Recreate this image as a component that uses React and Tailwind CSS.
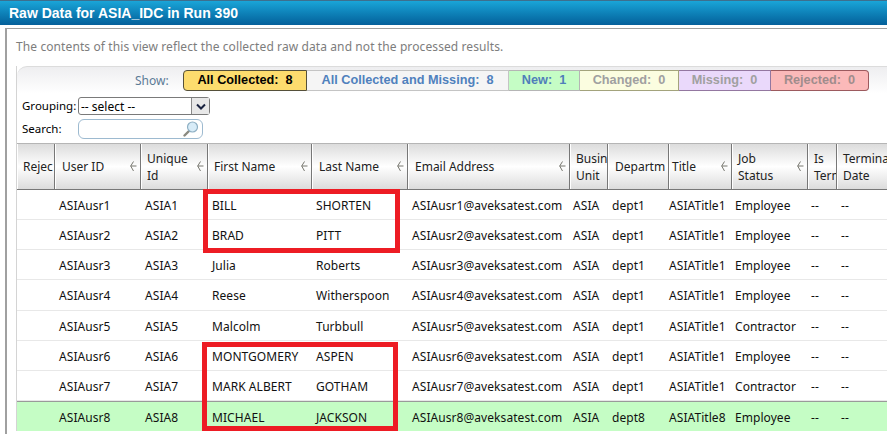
import React from "react";

const font = "font-['Noto_Sans','Open_Sans',sans-serif]";

const columns = [
  { label: "Rejec", width: "w-[38px]", sort: false, pad: "pl-[6px]" },
  { label: "User ID", width: "w-[86px]", sort: true, pad: "pl-[7px]" },
  { label: "Unique Id", width: "w-[67px]", sort: true, pad: "pl-[6px]" },
  { label: "First Name", width: "w-[104px]", sort: true, pad: "pl-[6px]" },
  { label: "Last Name", width: "w-[96px]", sort: true, pad: "pl-[7px]" },
  { label: "Email Address", width: "w-[162px]", sort: true, pad: "pl-[7px]" },
  { label: "Busin Unit", width: "w-[38px]", sort: false, pad: "pl-[6px]" },
  { label: "Departm", width: "w-[61px]", sort: false, pad: "pl-[7px]" },
  { label: "Title", width: "w-[63px]", sort: true, pad: "pl-[3px]" },
  { label: "Job\nStatus", width: "w-[76px]", sort: true, pad: "pl-[6px]" },
  { label: "Is Term", width: "w-[29px]", sort: false, pad: "pl-[6px]" },
  { label: "Termina Date", width: "w-[60px]", sort: false, pad: "pl-[6px]" },
];

const rows = [
  ["1", "BILL", "SHORTEN", "dept1", "Title1", "Employee"],
  ["2", "BRAD", "PITT", "dept1", "Title1", "Employee"],
  ["3", "Julia", "Roberts", "dept1", "Title1", "Employee"],
  ["4", "Reese", "Witherspoon", "dept1", "Title1", "Employee"],
  ["5", "Malcolm", "Turbbull", "dept1", "Title1", "Contractor"],
  ["6", "MONTGOMERY", "ASPEN", "dept1", "Title1", "Employee"],
  ["7", "MARK ALBERT", "GOTHAM", "dept1", "Title1", "Contractor"],
  ["8", "MICHAEL", "JACKSON", "dept8", "Title8", "Employee"],
];

const SortIcon = () => (
  <svg width="7" height="11" viewBox="0 0 7 11" className="shrink-0">
    <path d="M3.5 0.5L0.7 5H6.5M0.7 5L3.5 10" fill="none" stroke="#77776f" strokeWidth="1" />
  </svg>
);

const SearchIcon = () => (
  <svg width="16" height="16" viewBox="0 0 16 16">
    <path d="M6 10L1.5 14.5" stroke="#8a8a80" strokeWidth="2.4" strokeLinecap="round" />
    <circle cx="9.5" cy="6" r="5" fill="#d8ecf8" stroke="#8fb0c4" strokeWidth="1.2" />
  </svg>
);

const Tab = ({ className, children, count }) => (
  <div className={`h-[21px] flex items-center justify-center border-y border-r text-[12.7px] font-bold whitespace-pre font-['Liberation_Sans',sans-serif] ${className}`}>
    {children}:  {count}
  </div>
);

const App = () => {
  return (
    <div className={`w-[887px] h-[434px] overflow-hidden bg-white ${font}`}>
      <div className="h-[25px] pl-[9px] flex items-center border-t border-[#3d6f8e] bg-gradient-to-b from-[#1aa5d8] to-[#05609a] text-white text-[14px] font-bold font-['Liberation_Sans',sans-serif]">
        Raw Data for ASIA_IDC in Run 390
      </div>
      <div className="mt-[3px] ml-[5px] border-l-2 border-t border-[#a0a0a0] pl-[9px] h-[406px]">
        <p className="h-[37px] pt-[10px] text-[12px] leading-[16px] tracking-[0.1px] text-[#7d7d7d] whitespace-nowrap">
          The contents of this view reflect the collected raw data and not the processed results.
        </p>
        <div className="w-[873px] relative border-l border-[#d4d4d4]">
          <div className="h-[77px] rounded-tl-[10px] border-t border-[#dcdcdc] bg-gradient-to-b from-[#eeeef0] to-white to-[35%]">
            <div className="flex items-center pt-[3px]">
              <span className="ml-[118px] w-[48px] text-[12px] text-[#5c7a96]">Show:</span>
              <Tab className="w-[124px] rounded-l-[4px] border-l border-[#55503a] bg-[#fddc6e] text-black" count={8}>All Collected</Tab>
              <Tab className="w-[202px] border-[#c4c4c4] bg-[#f5f5f5] text-[#4f81bd]" count={8}>All Collected and Missing</Tab>
              <Tab className="w-[71px] border-[#b5b5b5] bg-[#c5fdc5] text-[#4f7fba]" count={1}>New</Tab>
              <Tab className="w-[99px] border-[#a3a37c] bg-[#fbfde0] text-[#a0a0a0]" count={0}>Changed</Tab>
              <Tab className="w-[92px] border-[#9377a0] bg-[#ead9fb] text-[#a0a0a0]" count={0}>Missing</Tab>
              <Tab className="w-[98px] rounded-r-[4px] border-[#9c5a5e] bg-[#fbb9b9] text-[#a08c8c]" count={0}>Rejected</Tab>
            </div>
            <div className="flex items-center mt-[6px] pl-[5px] h-[18px]">
              <span className="w-[56px] text-[11.5px] text-black">Grouping:</span>
              <div className="w-[132px] h-[18px] flex border border-[#7a7a7a] rounded-[3px] bg-white">
                <span className="flex-1 pl-[2px] pt-[1px] text-[12px] leading-[16px] text-black">-- select --</span>
                <span className="w-[18px] flex items-center justify-center border-l border-[#8a8a8a] bg-[#e8e8e8]">
                  <svg width="10" height="7" viewBox="0 0 10 7">
                    <path d="M1 1.5L5 5.5L9 1.5" fill="none" stroke="#1a2340" strokeWidth="2" />
                  </svg>
                </span>
              </div>
            </div>
            <div className="flex items-center mt-[4px] pl-[5px] h-[20px]">
              <span className="w-[56px] text-[11.5px] text-black">Search:</span>
              <div className="w-[125px] h-[20px] flex items-center justify-end pr-[3px] border border-[#9dbad0] rounded-[6px] bg-white">
                <SearchIcon />
              </div>
            </div>
          </div>

          <div className="flex h-[47px] border-t border-t-[#b5b5b5] border-b border-b-[#777777] bg-gradient-to-b from-[#dcdcdc] via-white to-[#dcdcdc]">
            {columns.map((col) => (
              <div
                key={col.label}
                className={`${col.width} ${col.pad} shrink-0 flex items-center overflow-hidden border-r border-[#777777] shadow-[inset_1px_0_0_#ffffff] text-[12px] leading-[17px] text-[#222222]`}
              >
                <span className="flex-1 min-w-0 whitespace-pre-line">{col.label}</span>
                {col.sort && (
                  <span className="w-[10px] shrink-0 flex justify-start">
                    <SortIcon />
                  </span>
                )}
              </div>
            ))}
          </div>

          {rows.map(([n, first, last, dept, title, job], index) => (
            <div
              key={n}
              className={`flex items-center pt-[2px] text-[12px] tracking-[0.06px] text-[#111111] whitespace-nowrap ${
                index === 3 ? "h-[31px]" : "h-[30px]"
              } ${index === 7 ? "bg-[#c5fdc5] border-t border-[#9a9a9a]" : "border-b border-[#e8e8e8]"}`}
            >
              <span className="w-[38px] shrink-0" />
              <span className="w-[86px] shrink-0 pl-[4px]">ASIAusr{n}</span>
              <span className="w-[67px] shrink-0 pl-[4px]">ASIA{n}</span>
              <span className="w-[104px] shrink-0 pl-[4px]">{first}</span>
              <span className="w-[96px] shrink-0 pl-[4px]">{last}</span>
              <span className="w-[162px] shrink-0 pl-[4px]">ASIAusr{n}@aveksatest.com</span>
              <span className="w-[38px] shrink-0 pl-[3px]">ASIA</span>
              <span className="w-[61px] shrink-0 pl-[4px]">{dept}</span>
              <span className="w-[63px] shrink-0">ASIA{title}</span>
              <span className="w-[76px] shrink-0 pl-[3px]">{job}</span>
              <span className="w-[29px] shrink-0 pl-[3px]">--</span>
              <span className="w-[60px] shrink-0 pl-[4px]">--</span>
            </div>
          ))}

          {/* red highlight boxes lying over the first and last name cells */}
          <div className="absolute left-[186px] top-[123px] w-[197px] h-[64px] border-[5px] border-[#ed1c24]" />
          <div className="absolute left-[185px] top-[276px] w-[196px] h-[89px] border-[5px] border-[#ed1c24]" />
        </div>
      </div>
    </div>
  );
};

export default App;
